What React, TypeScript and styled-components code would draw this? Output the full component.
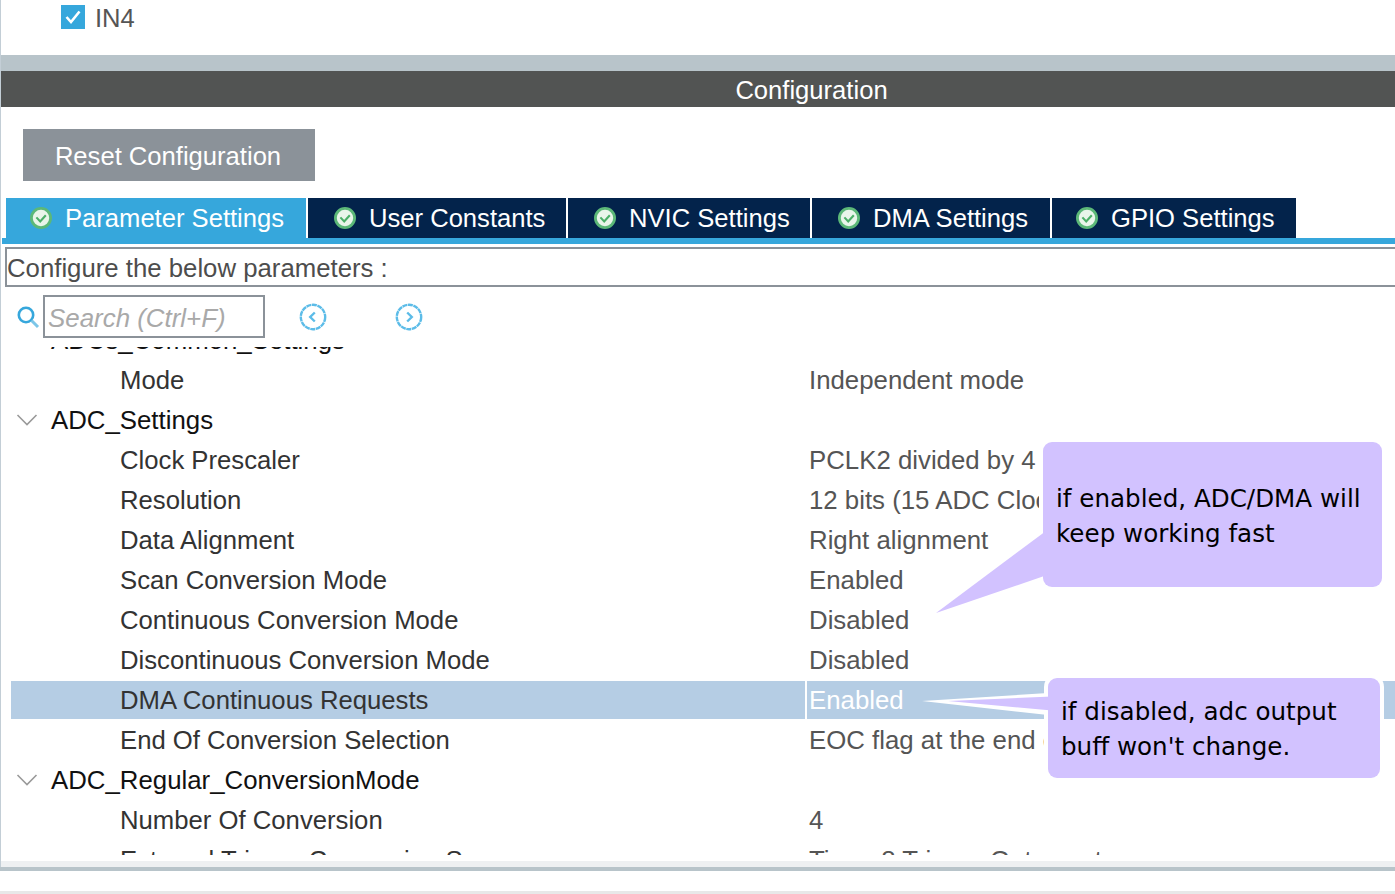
import React from "react";
import styled, { createGlobalStyle } from "styled-components";

const GlobalStyle = createGlobalStyle`
  html, body {
    margin: 0;
    padding: 0;
    background: #ffffff;
    overflow: hidden;
  }
  body {
    font-family: "Liberation Sans", Arial, sans-serif;
  }
`;

const Page = styled.div`
  position: relative;
  width: 1395px;
  height: 894px;
  overflow: hidden;
  background: #fff;
`;

const Panel = styled.div`
  height: 861px;
  border-left: 1px solid #c3ced6;
  box-sizing: border-box;
  display: flex;
  flex-direction: column;
`;

const ChannelRow = styled.div`
  height: 55px;
  flex: none;
  display: flex;
  align-items: flex-start;
  gap: 10px;
  padding: 5px 0 0 60px;
  box-sizing: border-box;
  font-size: 25.6px;
  line-height: 26px;
  color: #555;
`;

const CheckBox = styled.span`
  width: 24px;
  height: 24px;
  background: #36a7dc;
  display: flex;
  align-items: center;
  justify-content: center;
`;

const Band = styled.div`
  height: 16px;
  flex: none;
  background: #b8c4ca;
`;

const TitleBar = styled.div`
  height: 36px;
  flex: none;
  background: #525453;
  color: #fff;
  font-size: 25.6px;
  line-height: 38px;
  text-align: center;
  padding-left: 227px;
`;

const ResetButton = styled.button`
  display: block;
  flex: none;
  width: 292px;
  height: 52px;
  margin: 22px 0 17px 22px;
  padding: 0 2px 0 0;
  border: none;
  background: #8b9299;
  color: #fff;
  font: 25.6px/54px "Liberation Sans", Arial, sans-serif;
`;

const TabBar = styled.div`
  height: 46px;
  flex: none;
  box-sizing: border-box;
  border-bottom: 6px solid #36a7dc;
  padding-left: 4px;
  margin-left: 1px;
  display: flex;
  gap: 2px;
`;

const Tab = styled.div<{ $active?: boolean; $width: number; $pad: number }>`
  width: ${(p) => p.$width}px;
  height: 40px;
  flex: none;
  box-sizing: border-box;
  padding-left: ${(p) => p.$pad}px;
  display: flex;
  align-items: center;
  gap: 13px;
  background: ${(p) => (p.$active ? "#36a7dc" : "#03234b")};
  color: #fff;
  font-size: 25.6px;
`;

const Hint = styled.div`
  height: 40px;
  flex: none;
  margin: 3px 0 0 4px;
  box-sizing: border-box;
  border: 2px solid #8b9299;
  border-right: none;
  font-size: 25.75px;
  line-height: 39px;
  color: #4d4d4d;
`;

const SearchRow = styled.div`
  height: 43px;
  flex: none;
  margin-top: 8px;
  padding-left: 15px;
  display: flex;
  align-items: center;
`;

const SearchBox = styled.div`
  width: 222px;
  height: 43px;
  margin-left: 3px;
  box-sizing: border-box;
  border: 2px solid #8b9299;
  padding-left: 3px;
  font-size: 25.9px;
  line-height: 42px;
  font-style: italic;
  color: #a9a9a9;
`;

const NavButton = styled.span<{ $gap: number }>`
  display: flex;
  margin-left: ${(p) => p.$gap}px;
`;

const TreeViewport = styled.div`
  height: 508px;
  flex: none;
  margin-top: 9px;
  overflow: hidden;
  padding-left: 10px;
`;

const TreeList = styled.div`
  margin-top: -27px;
`;

const Row = styled.div<{ $selected?: boolean }>`
  height: 40px;
  display: flex;
  align-items: center;
  font-size: 25.7px;
  ${(p) =>
    p.$selected &&
    `
    height: 38px;
    margin: 1px 0;
    color: #fff;
  `}
`;

const GroupArrow = styled.span`
  width: 40px;
  flex: none;
  display: flex;
  padding-left: 5px;
  box-sizing: border-box;
`;

const GroupName = styled.span`
  color: #111;
  font-size: 25.8px;
`;

const ParamName = styled.span<{ $selected?: boolean }>`
  width: 794px;
  height: 100%;
  flex: none;
  box-sizing: border-box;
  padding-left: 109px;
  display: flex;
  align-items: center;
  color: #333;
  background: ${(p) => (p.$selected ? "#b5cde4" : "transparent")};
`;

const ParamValue = styled.span<{ $selected?: boolean }>`
  flex: 1;
  height: 100%;
  margin-left: 2px;
  padding-left: 2px;
  display: flex;
  align-items: center;
  white-space: nowrap;
  overflow: hidden;
  font-size: 25.8px;
  color: ${(p) => (p.$selected ? "#fff" : "#555")};
  background: ${(p) => (p.$selected ? "#b5cde4" : "transparent")};
`;

const FootBand = styled.div`
  height: 6px;
  background: #eef0f2;
  border-left: 1px solid #c3ced6;
`;

const FootLine = styled.div`
  height: 4px;
  background: #b8c4ca;
`;

const StatusGap = styled.div`
  height: 20px;
  background: #fff;
`;

const StatusLine = styled.div`
  height: 3px;
  background: #e8e8e8;
`;

const Callout = styled.div<{ $x: number; $y: number; $w: number; $h: number }>`
  position: absolute;
  left: ${(p) => p.$x}px;
  top: ${(p) => p.$y}px;
  width: ${(p) => p.$w}px;
  height: ${(p) => p.$h}px;
  box-sizing: border-box;
  padding: 0 0 0 13px;
  display: flex;
  align-items: center;
  background: #d2c2ff;
  border-radius: 9px;
  box-shadow: 0 0 0 4px #fff;
  color: #000;
  font-family: "DejaVu Sans", Verdana, sans-serif;
  font-size: 24.6px;
  line-height: 35px;
`;

const CalloutText = styled.span<{ $shift: number }>`
  display: block;
  margin-top: ${(p) => p.$shift}px;
  white-space: nowrap;
`;

const Tail = styled.svg`
  position: absolute;
  left: 0;
  top: 0;
  pointer-events: none;
`;

const StatusIcon = () => (
  <svg width="22" height="22" viewBox="0 0 22 22">
    <circle cx="11" cy="11" r="9.6" fill="#e9f5ea" stroke="#5cb878" strokeWidth="2.8" />
    <path d="M6.4 10.4 10.2 14.4 15.8 8.2" fill="none" stroke="#4caf68" strokeWidth="2.1" />
  </svg>
);

const Chevron = () => (
  <svg width="22" height="14" viewBox="0 0 22 14">
    <path d="M1.5 2 11 11.5 20.5 2" fill="none" stroke="#9a9a9a" strokeWidth="1.6" />
  </svg>
);

const tabs = [
  { label: "Parameter Settings", width: 300, pad: 24, active: true },
  { label: "User Constants", width: 258, pad: 26 },
  { label: "NVIC Settings", width: 242, pad: 26 },
  { label: "DMA Settings", width: 238, pad: 26 },
  { label: "GPIO Settings", width: 244, pad: 24 },
];

type TreeRow = { group?: string; name?: string; value?: string; selected?: boolean };

const rows: TreeRow[] = [
  { group: "ADCs_Common_Settings" },
  { name: "Mode", value: "Independent mode" },
  { group: "ADC_Settings" },
  { name: "Clock Prescaler", value: "PCLK2 divided by 4" },
  { name: "Resolution", value: "12 bits (15 ADC Clock cycles)" },
  { name: "Data Alignment", value: "Right alignment" },
  { name: "Scan Conversion Mode", value: "Enabled" },
  { name: "Continuous Conversion Mode", value: "Disabled" },
  { name: "Discontinuous Conversion Mode", value: "Disabled" },
  { name: "DMA Continuous Requests", value: "Enabled", selected: true },
  { name: "End Of Conversion Selection", value: "EOC flag at the end of single conversion" },
  { group: "ADC_Regular_ConversionMode" },
  { name: "Number Of Conversion", value: "4" },
  { name: "External Trigger Conversion Source", value: "Timer 8 Trigger Out event" },
];

export default function App() {
  return (
    <Page>
      <GlobalStyle />
      <Panel>
        <ChannelRow>
          <CheckBox>
            <svg width="18" height="16" viewBox="0 0 18 16">
              <path d="M2.5 8 7 13 15.5 2.5" fill="none" stroke="#fff" strokeWidth="2.6" />
            </svg>
          </CheckBox>
          IN4
        </ChannelRow>
        <Band />
        <TitleBar>Configuration</TitleBar>
        <ResetButton>Reset Configuration</ResetButton>
        <TabBar>
          {tabs.map((t) => (
            <Tab key={t.label} $active={t.active} $width={t.width} $pad={t.pad}>
              <StatusIcon />
              {t.label}
            </Tab>
          ))}
        </TabBar>
        <Hint>Configure the below parameters :</Hint>
        <SearchRow>
          <svg width="24" height="24" viewBox="0 0 24 24">
            <circle cx="10" cy="10" r="7.2" fill="none" stroke="#36a7dc" strokeWidth="2.6" />
            <path d="M15.5 15.5 22 22" stroke="#7cc6e8" strokeWidth="3" />
          </svg>
          <SearchBox>Search (Ctrl+F)</SearchBox>
          <NavButton $gap={34}>
            <svg width="28" height="28" viewBox="0 0 28 28">
              <circle cx="14" cy="14" r="12.2" fill="none" stroke="#5cbce8" strokeWidth="2.4" strokeDasharray="5 0.6" />
              <path d="M15.8 9.5 11.2 14 15.8 18.5" fill="none" stroke="#5cbce8" strokeWidth="2.4" />
            </svg>
          </NavButton>
          <NavButton $gap={68}>
            <svg width="28" height="28" viewBox="0 0 28 28">
              <circle cx="14" cy="14" r="12.2" fill="none" stroke="#5cbce8" strokeWidth="2.4" strokeDasharray="5 0.6" />
              <path d="M12.2 9.5 16.8 14 12.2 18.5" fill="none" stroke="#5cbce8" strokeWidth="2.4" />
            </svg>
          </NavButton>
        </SearchRow>
        <TreeViewport>
          <TreeList>
            {rows.map((r) =>
              r.group ? (
                <Row key={r.group}>
                  <GroupArrow>
                    <Chevron />
                  </GroupArrow>
                  <GroupName>{r.group}</GroupName>
                </Row>
              ) : (
                <Row key={r.name} $selected={r.selected}>
                  <ParamName $selected={r.selected}>{r.name}</ParamName>
                  <ParamValue $selected={r.selected}>{r.value}</ParamValue>
                </Row>
              ),
            )}
          </TreeList>
        </TreeViewport>
      </Panel>
      <FootBand />
      <FootLine />
      <StatusGap />
      <StatusLine />

      <Callout $x={1043} $y={442} $w={339} $h={145}>
        <CalloutText $shift={2}>
          if enabled, ADC/DMA will
          <br />
          keep working fast
        </CalloutText>
      </Callout>
      <Callout $x={1048} $y={678} $w={332} $h={100}>
        <CalloutText $shift={2}>
          if disabled, adc output
          <br />
          buff won't change.
        </CalloutText>
      </Callout>
      <Tail width="1395" height="894" viewBox="0 0 1395 894">
        <polygon points="1050,528 936,613 1050,574" fill="#d2c2ff" />
        <polygon points="1048,693 922,701 1048,715" fill="#fff" />
        <polygon points="1052,696.5 948,701 1052,710.5" fill="#d2c2ff" />
      </Tail>
    </Page>
  );
}
